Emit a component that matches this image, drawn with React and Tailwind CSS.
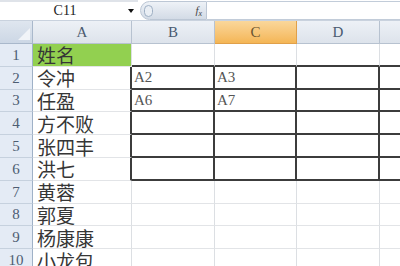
import React from "react";

const cols = ["A", "B", "C", "D", ""];
const names = ["姓名", "令冲", "任盈", "方不败", "张四丰", "洪七", "黄蓉", "郭夏", "杨康康", "小龙包"];
const data = {
  "2-1": "A2",
  "2-2": "A3",
  "3-1": "A6",
  "3-2": "A7",
};

const serif = { fontFamily: '"Liberation Serif", "DejaVu Serif", serif' };
const cjk = { fontFamily: '"Noto Sans CJK SC", "Noto Sans", sans-serif' };

export default function App() {
  const rows = Array.from({ length: 10 }, (_, i) => i + 1);
  return (
    <div className="w-[400px] h-[266px] overflow-hidden bg-white relative">
      {/* formula bar */}
      <div className="h-[21px] flex border-b border-[#c9d2de] bg-white">
        <div className="w-[138px] h-[20px] flex items-center border-t-2 border-[#dfe3e9] relative">
          <span className="flex-1 text-center text-[14px] text-[#222] leading-none pl-[2px]" style={serif}>C11</span>
          <span className="w-0 h-0 border-l-[3px] border-r-[3px] border-t-[4px] border-l-transparent border-r-transparent border-t-[#111] mr-[4px]" />
        </div>
        <div className="w-[2px]" />
        <div className="w-[67px] h-[19px] mt-[1px] rounded-l-full bg-gradient-to-b from-[#eef2f7] to-[#d3dbe6] border border-[#bcc7d5] flex items-center justify-between pl-[3px] pr-[4px]">
          <span className="w-[9px] h-[12px] rounded-full border border-[#9fb0c4] bg-[#e9eef4]" />
          <span className="italic text-[11px] text-[#444] leading-none" style={serif}>f<sub className="text-[8px]">x</sub></span>
        </div>
        <div className="flex-1 h-[19px] mt-[1px] border-t border-b border-[#c2ccd9] bg-white" />
      </div>
      {/* grid */}
      <div className="grid grid-cols-[33px_99px_83px_82px_83px_100px] grid-rows-[23px_repeat(10,22.8px)]">
        {/* header row */}
        <div className="relative bg-gradient-to-b from-[#dfe6ef] to-[#ccd7e5] border-r border-b border-[#a9b8cb]">
          <span
            className="absolute right-[2px] bottom-[3px] w-0 h-0"
            style={{ borderBottom: "12px solid #f1f4f8", borderLeft: "12px solid transparent" }}
          />
        </div>
        {cols.map((c, i) => (
          <div
            key={c + i}
            className={
              "flex items-center justify-center text-[15px] border-r border-b " +
              (i === 2
                ? "bg-gradient-to-b from-[#fad79a] to-[#f4b655] border-[#e0a04a] text-[#6b5430]"
                : "bg-gradient-to-b from-[#edf1f6] to-[#dde3eb] border-[#b7c2d0] text-[#4a5a70]")
            }
            style={serif}
          >
            {c}
          </div>
        ))}
        {rows.map((r) => (
          <React.Fragment key={r}>
            <div
              className="flex items-center justify-center text-[15px] leading-[20px] text-[#4d5d72] bg-[#e4ebf5] border-r border-b border-r-[#9fb1c7] border-b-[#c6d1de]"
              style={serif}
            >
              {r}
            </div>
            {[0, 1, 2, 3, 4].map((c) => {
              const inBox = c >= 1 && r >= 2 && r <= 6;
              const rightThick = (c === 0 && r >= 2 && r <= 6) || inBox;
              const bottomThick = (r === 1 && c >= 1) || inBox;
              let cls = "flex items-center overflow-hidden whitespace-nowrap ";
              if (c === 0) {
                cls += r === 1 ? "bg-[#92d050] " : "bg-white ";
              }
              cls += rightThick ? "border-r-2 border-r-[#3c3c3c] " : "border-r border-r-[#dcdfe3] ";
              cls += bottomThick ? "border-b-2 border-b-[#3c3c3c] " : "border-b border-b-[#e2e4e7] ";
              if (c === 0) {
                return (
                  <div key={c} className={cls + "pl-[4px] text-[19px] text-[#363636] leading-[21px]"} style={cjk}>
                    {names[r - 1]}
                  </div>
                );
              }
              const v = data[r + "-" + c];
              return (
                <div key={c} className={cls + "pl-[2px] text-[15px] text-[#555] leading-[18px]"} style={serif}>
                  {v}
                </div>
              );
            })}
          </React.Fragment>
        ))}
      </div>
    </div>
  );
}
